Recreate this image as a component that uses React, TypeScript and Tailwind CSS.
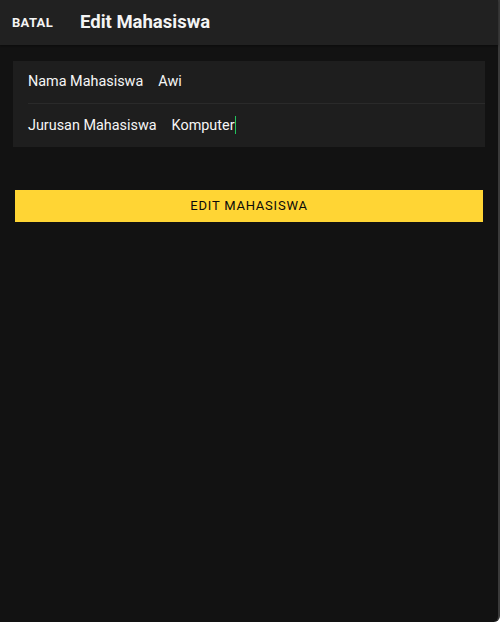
const fields = [
  { label: "Nama Mahasiswa", value: "Awi", focused: false },
  { label: "Jurusan Mahasiswa", value: "Komputer", focused: true },
];

export default function App() {
  return (
    <div className="h-[622px] w-[500px] bg-[#121212] border-r-2 border-[#3a3a3a] rounded-br-md flex flex-col font-['Roboto',sans-serif] text-white">
      <header className="h-[45px] bg-[#212121] flex items-center shrink-0 shadow-[0_1px_2px_rgba(0,0,0,0.4)]">
        <button className="pl-3 w-[80px] text-left text-[13px] font-bold tracking-wide text-[#f4f4f4]">
          BATAL
        </button>
        <h1 className="text-[18.5px] font-bold text-[#f4f4f4]">Edit Mahasiswa</h1>
      </header>

      <main className="flex flex-col px-[13px] pt-4">
        <div className="bg-[#1e1e1e] w-[472px]">
          {fields.map((f, i) => (
            <div key={f.label} className="pl-[15px]">
              <div
                className={`h-[43px] flex items-center text-[14.4px] ${
                  i === 0 ? "border-b border-[#2a2a2a]" : ""
                }`}
              >
                <span className="text-[#f6f6f6]">{f.label}</span>
                <span className="ml-[15px] text-[#f6f6f6] flex items-center">
                  {f.value}
                  {f.focused && <span className="inline-block w-px h-[18px] bg-[#22c55e]" />}
                </span>
              </div>
            </div>
          ))}
        </div>

        <button className="mt-[43px] mx-[2px] h-[32px] bg-[#ffd534] text-[#0a0a0a] text-[13px] tracking-[0.06em] font-normal">
          EDIT MAHASISWA
        </button>
      </main>
    </div>
  );
}
